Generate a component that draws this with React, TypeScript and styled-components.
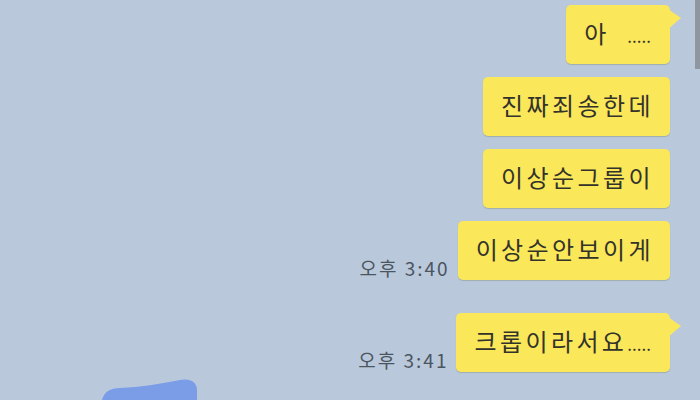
import styled, { createGlobalStyle } from "styled-components";

const GlobalStyle = createGlobalStyle`
    html, body {
        margin: 0;
        padding: 0;
        background: #b9c9db;
        overflow: hidden;
    }
    body {
        font-family: "Noto Sans CJK KR", "Noto Sans", sans-serif;
    }
`;

const Screen = styled.div`
    position: relative;
    width: 700px;
    height: 400px;
    background: #b9c9db;
    overflow: hidden;
`;

const ChatList = styled.div`
    display: flex;
    flex-direction: column;
    align-items: flex-end;
    gap: 13px;
    padding: 5px 30px 0 0;
`;

const Row = styled.div<{ $newGroup?: boolean }>`
    display: flex;
    justify-content: flex-end;
    align-items: flex-end;
    gap: 8px;
    margin-top: ${(p) => (p.$newGroup ? "20px" : "0")};
`;

const Time = styled.span`
    font-family: "Noto Sans CJK KR", "Liberation Sans", sans-serif;
    font-size: 19px;
    color: #4b5560;
    line-height: 1;
    margin-bottom: 3px;
    letter-spacing: 2px;
    white-space: pre;
`;

const Bubble = styled.div<{ $tail?: boolean }>`
    position: relative;
    box-sizing: border-box;
    height: 59px;
    display: flex;
    align-items: center;
    padding: 0 16px 5px 18px;
    background: #fbe75a;
    border-radius: 5px;
    box-shadow: 0 1px 1px rgba(90, 90, 40, 0.25);
    font-size: 24px;
    color: #33332b;
    white-space: pre;
    letter-spacing: 3.4px;

    &::after {
        content: "";
        display: ${(p) => (p.$tail ? "block" : "none")};
        position: absolute;
        right: -11px;
        top: 4px;
        width: 13px;
        height: 20px;
        background: #fbe75a;
        clip-path: polygon(0 0, 100% 45%, 0 100%);
    }
`;

const Dots = styled.span`
    font-size: 17px;
    letter-spacing: 0;
    align-self: center;
    margin-top: 6px;
    padding-right: 3px;
`;

const ScrollThumb = styled.div`
    position: absolute;
    top: 0;
    right: 0;
    width: 5px;
    height: 69px;
    background: #8f969f;
`;

const Scribble = styled.svg`
    position: absolute;
    left: 100px;
    bottom: 0;
`;

export default function App() {
    return (
        <Screen>
            <GlobalStyle />
            <ChatList>
                <Row>
                    <Bubble $tail>
                        아{"  "}<Dots>.....</Dots>
                    </Bubble>
                </Row>
                <Row>
                    <Bubble>진짜죄송한데</Bubble>
                </Row>
                <Row>
                    <Bubble>이상순그룹이</Bubble>
                </Row>
                <Row>
                    <Time>오후 3:40</Time>
                    <Bubble>이상순안보이게</Bubble>
                </Row>
                <Row $newGroup>
                    <Time>오후 3:41</Time>
                    <Bubble $tail>
                        크롭이라서요<Dots>.....</Dots>
                    </Bubble>
                </Row>
            </ChatList>
            <ScrollThumb />
            <Scribble width="100" height="22" viewBox="0 0 100 22">
                <path
                    d="M2 22 C4 14 10 10 20 10 C40 9 60 6 80 2 C90 0 97 4 97 12 L97 22 Z"
                    fill="#7b9de8"
                />
            </Scribble>
        </Screen>
    );
}
